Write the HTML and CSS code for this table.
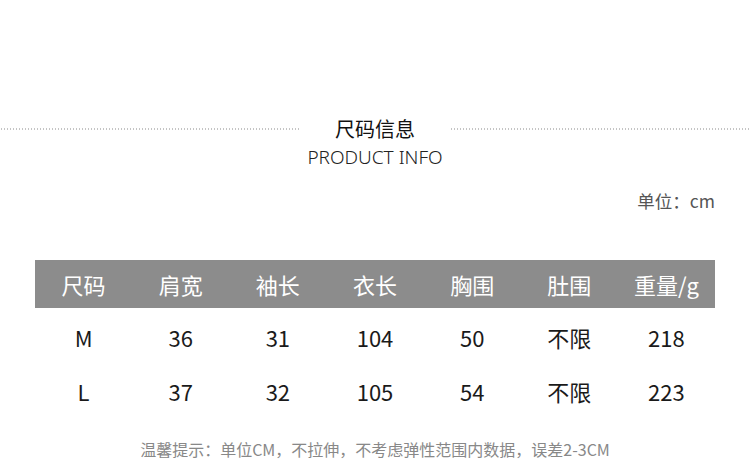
FILE: index.html
```html
<!DOCTYPE html>
<html lang="zh">
<head>
<meta charset="utf-8">
<link rel="stylesheet" href="styles.css">
</head>
<body>
<div class="page">
  <div class="title-row">
    <div class="dots"></div>
    <div class="title-zh">尺码信息</div>
    <div class="dots"></div>
  </div>
  <div class="title-en">PRODUCT INFO</div>
  <div class="unit">单位：cm</div>
  <div class="table">
    <div class="row head">
      <div>尺码</div><div>肩宽</div><div>袖长</div><div>衣长</div><div>胸围</div><div>肚围</div><div>重量/g</div>
    </div>
    <div class="row">
      <div>M</div><div>36</div><div>31</div><div>104</div><div>50</div><div>不限</div><div>218</div>
    </div>
    <div class="row">
      <div>L</div><div>37</div><div>32</div><div>105</div><div>54</div><div>不限</div><div>223</div>
    </div>
  </div>
  <div class="note">温馨提示：单位CM，不拉伸，不考虑弹性范围内数据，误差2-3CM</div>
</div>
</body>
</html>
```
FILE: styles.css
```css
html, body {
  margin: 0;
  padding: 0;
  background: #fff;
}
.page {
  width: 750px;
  height: 463px;
  font-family: "Noto Sans CJK SC", "Noto Sans", sans-serif;
  overflow: hidden;
}
.title-row {
  display: flex;
  align-items: center;
  padding-top: 115px;
  height: 28px;
}
.dots {
  flex: 1;
  height: 2px;
  background-image: radial-gradient(circle, #c4c4c4 0.9px, transparent 1.1px);
  background-size: 3px 2px;
  background-repeat: repeat-x;
}
.title-zh {
  width: 150px;
  text-align: center;
  font-size: 20px;
  line-height: 28px;
  color: #111;
}
.title-en {
  text-align: center;
  font-family: "Noto Sans", sans-serif;
  font-weight: 300;
  font-size: 19px;
  line-height: 26px;
  color: #222;
  margin-top: 1px;
}
.unit {
  text-align: right;
  padding-right: 35px;
  font-size: 17.5px;
  line-height: 24px;
  color: #555;
  margin-top: 19px;
}
.table {
  margin: 47px 35px 0;
}
.row {
  display: grid;
  grid-template-columns: repeat(7, 1fr);
  height: 51px;
  margin-top: 3px;
  align-items: center;
  text-align: center;
  font-size: 22px;
  color: #1a1a1a;
}
.row.head {
  height: 48px;
  margin-top: 0;
  background: #8c8c8c;
  color: #fff;
}
.note {
  text-align: center;
  font-size: 16px;
  line-height: 22px;
  color: #888;
  margin-top: 22px;
}
```
